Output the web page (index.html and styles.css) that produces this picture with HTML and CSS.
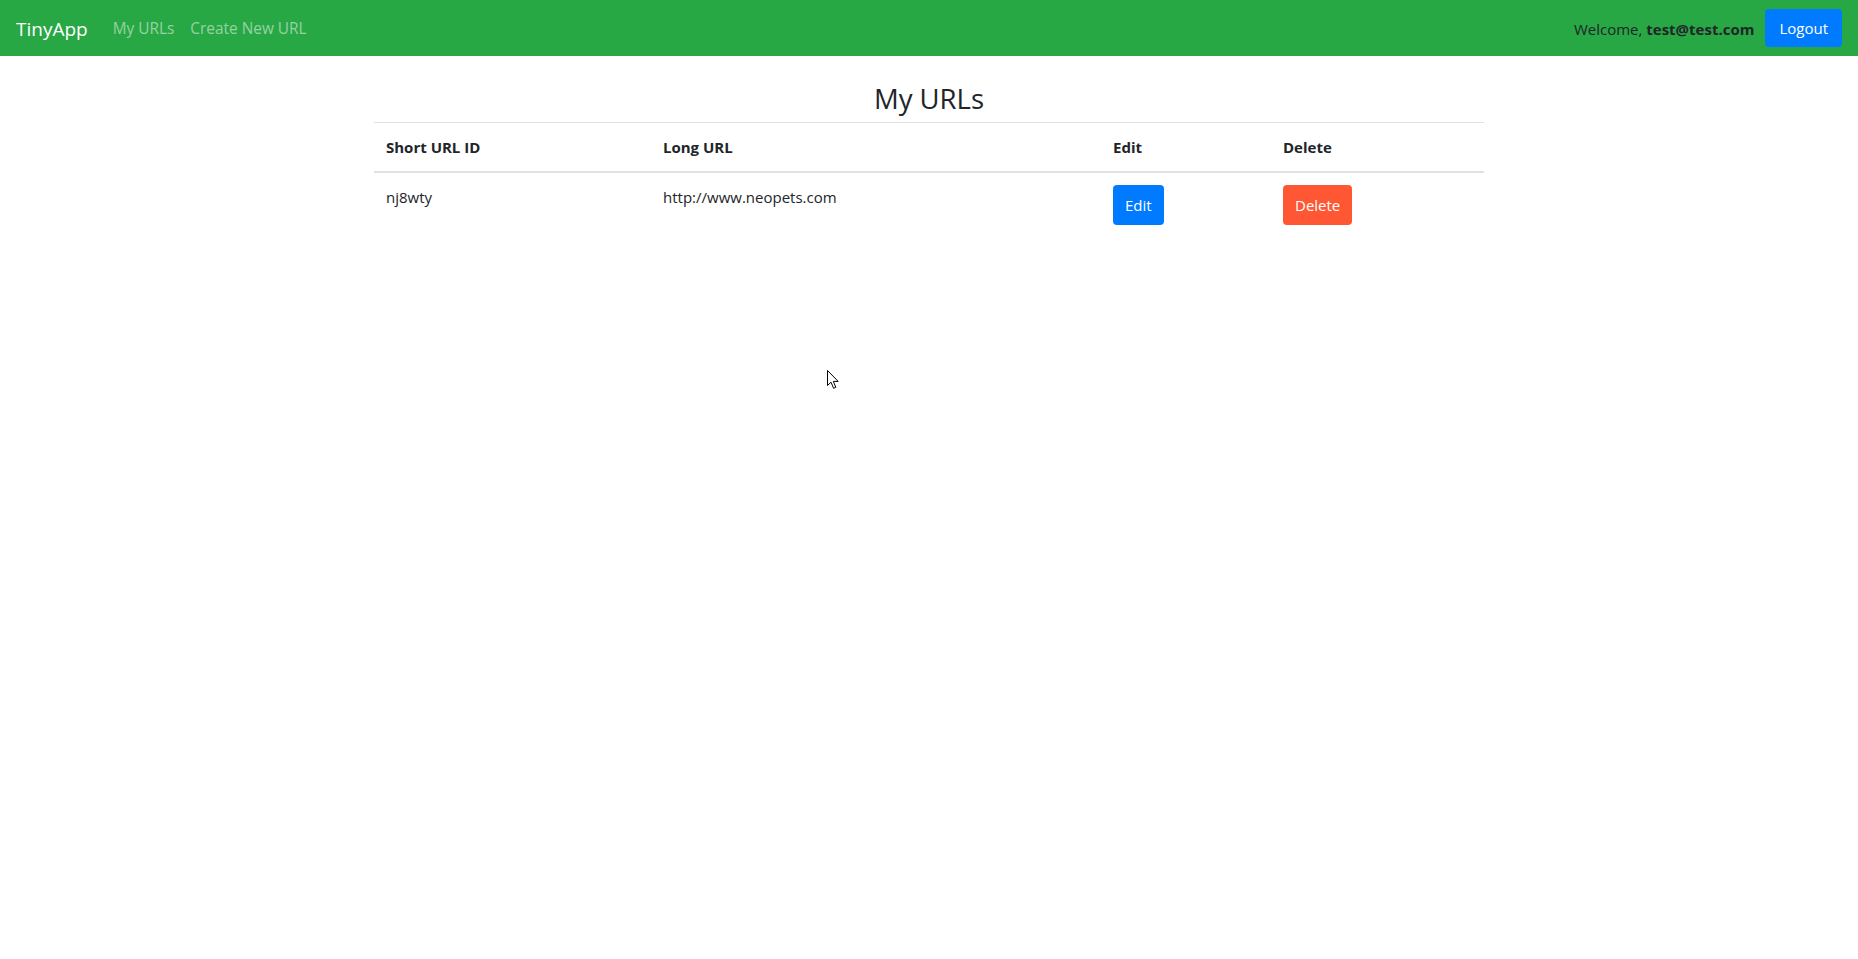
FILE: index.html
```html
<!DOCTYPE html>
<html lang="en">
<head>
<meta charset="utf-8">
<title>TinyApp</title>
<link rel="stylesheet" href="styles.css">
</head>
<body>
<nav class="navbar">
  <div class="nav-left">
    <a class="brand" href="#">TinyApp</a>
    <a class="nav-link" href="#">My URLs</a>
    <a class="nav-link" href="#">Create New URL</a>
  </div>
  <div class="nav-right">
    <span class="welcome">Welcome, <b>test@test.com</b></span>
    <button class="btn btn-primary btn-logout">Logout</button>
  </div>
</nav>
<main class="container">
  <h3 class="title">My URLs</h3>
  <table class="url-table">
    <thead>
      <tr>
        <th class="col-id">Short URL ID</th>
        <th class="col-long">Long URL</th>
        <th class="col-edit">Edit</th>
        <th class="col-del">Delete</th>
      </tr>
    </thead>
    <tbody>
      <tr>
        <td>nj8wty</td>
        <td>http://www.neopets.com</td>
        <td><button class="btn btn-primary">Edit</button></td>
        <td><button class="btn btn-danger">Delete</button></td>
      </tr>
    </tbody>
  </table>
</main>
<svg class="cursor" width="13" height="20" viewBox="0 0 13 20" aria-hidden="true">
  <path d="M0.5 0.5 L0.5 15.5 L4 12.2 L6.6 18.3 L8.8 17.3 L6.3 11.4 L11.2 11.4 Z" fill="#fff" stroke="#000" stroke-width="1" stroke-linejoin="round"/>
</svg>
</body>
</html>
```

FILE: styles.css
```css
* { box-sizing: border-box; }

html, body {
  margin: 0;
  padding: 0;
  background: #fff;
}

body {
  font-family: "Open Sans", "Noto Sans", sans-serif;
  font-size: 15px;
  line-height: 24px;
  color: #212529;
  position: relative;
  min-height: 959px;
}

.navbar {
  display: flex;
  align-items: center;
  justify-content: space-between;
  height: 56px;
  padding: 1px 16px 0;
  background: #28a745;
}

.nav-left {
  display: flex;
  align-items: center;
}

.brand {
  font-size: 19px;
  color: #fff;
  text-decoration: none;
  margin-right: 17px;
}

.nav-link {
  font-size: 15.4px;
  color: rgba(255, 255, 255, 0.5);
  text-decoration: none;
  padding: 0 8px;
}

.nav-right {
  display: flex;
  align-items: center;
  gap: 11px;
  margin-top: -1px;
}

.welcome {
  padding-top: 1px;
}

.welcome b {
  font-weight: 700;
}

.btn {
  display: inline-flex;
  align-items: center;
  justify-content: center;
  font-family: inherit;
  font-size: 15px;
  color: #fff;
  border: 0;
  border-radius: 4px;
  height: 40px;
  padding: 0 12px;
  cursor: pointer;
}

.btn-primary { background: #007bff; }
.btn-danger { background: #ff5733; }

.btn-logout {
  height: 38px;
  padding: 0 14px;
}

.container {
  width: 1110px;
  margin: 0 auto;
}

.title {
  text-align: center;
  font-size: 27.5px;
  font-weight: 500;
  line-height: 1.2;
  margin: 26px 0 7px;
}

.url-table {
  width: 100%;
  border-collapse: collapse;
}

.url-table th,
.url-table td {
  text-align: left;
  padding: 12px;
  vertical-align: top;
}

.url-table th {
  font-weight: 700;
  border-top: 1px solid #dee2e6;
  border-bottom: 2px solid #dee2e6;
  vertical-align: bottom;
}

.col-id { width: 277px; }
.col-long { width: 450px; }
.col-edit { width: 170px; }
.col-del { width: 213px; }

.cursor {
  position: absolute;
  left: 827px;
  top: 370px;
}
```
